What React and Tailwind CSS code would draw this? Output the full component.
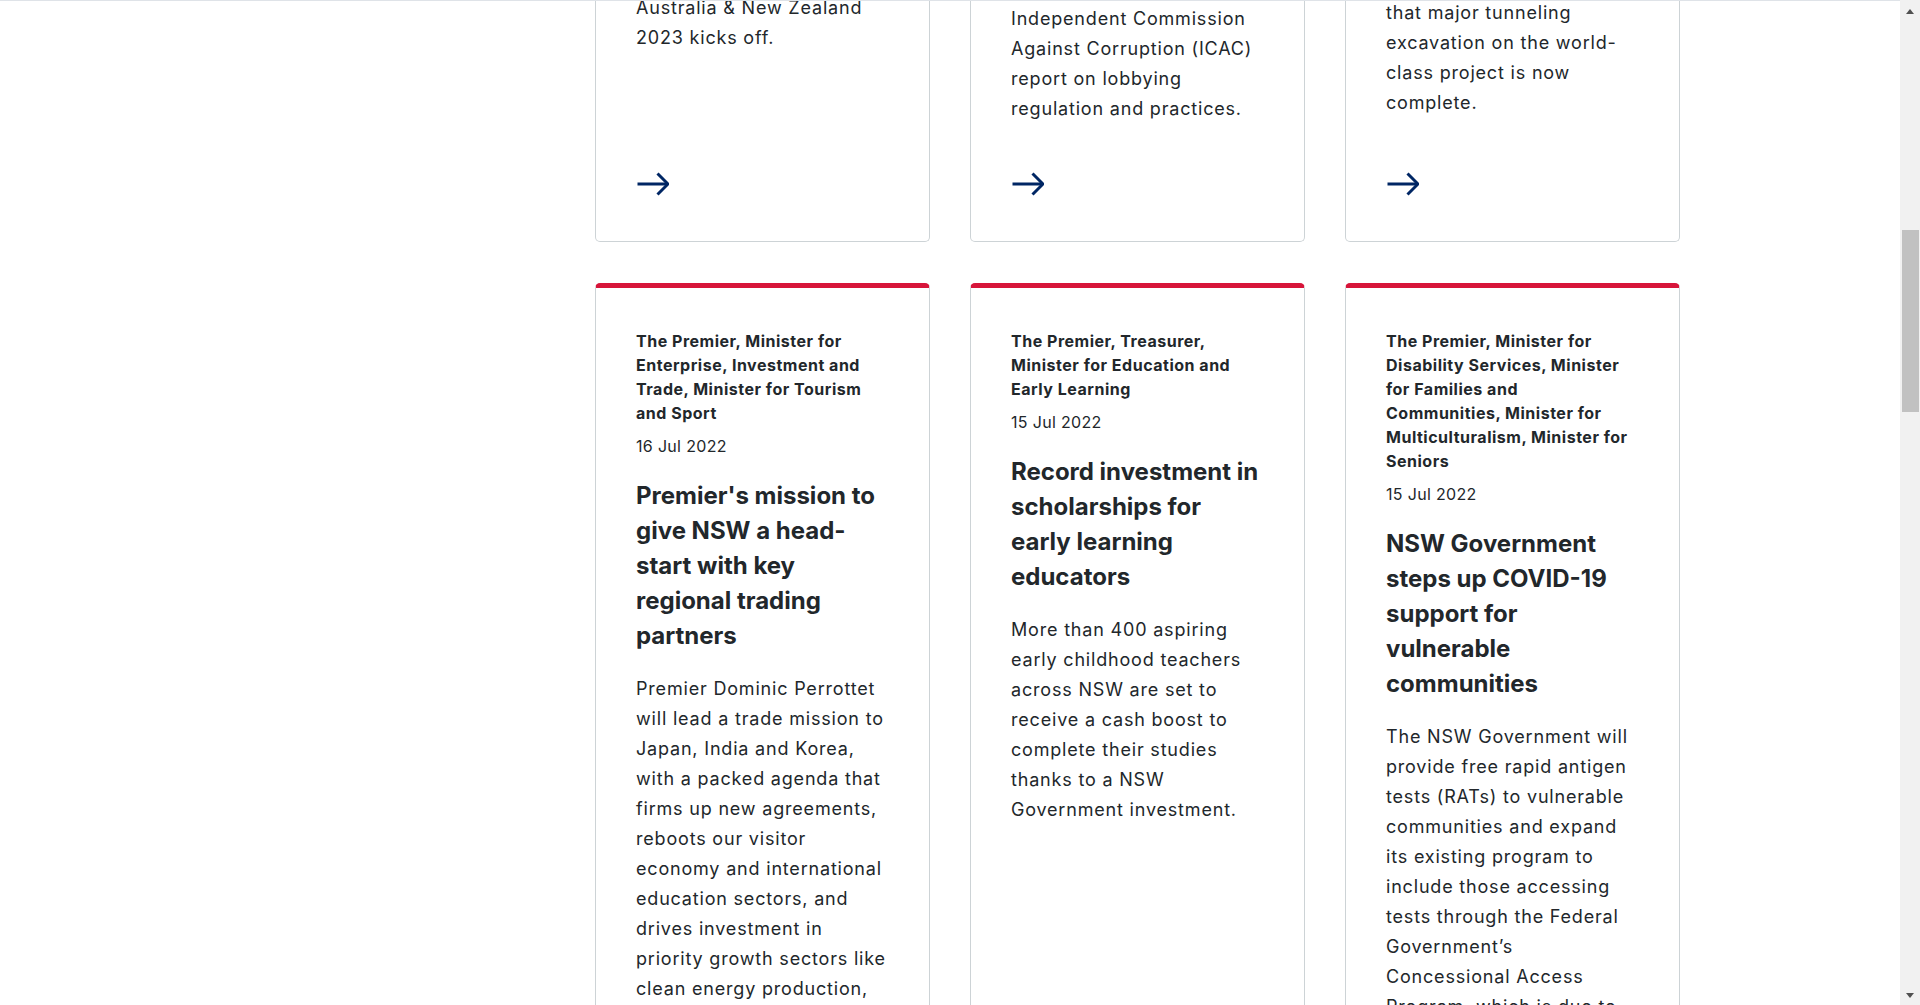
const topCards = [
  { offset: "mt-[-7px]", lines: ["Australia & New Zealand", "2023 kicks off."] },
  {
    offset: "mt-[4px]",
    lines: [
      "Independent Commission",
      "Against Corruption (ICAC)",
      "report on lobbying",
      "regulation and practices.",
    ],
  },
  {
    offset: "mt-[-2px]",
    lines: [
      "that major tunneling",
      "excavation on the world-",
      "class project is now",
      "complete.",
    ],
  },
];

const newsCards = [
  {
    author: [
      "The Premier, Minister for",
      "Enterprise, Investment and",
      "Trade, Minister for Tourism",
      "and Sport",
    ],
    date: "16 Jul 2022",
    title: [
      "Premier's mission to",
      "give NSW a head-",
      "start with key",
      "regional trading",
      "partners",
    ],
    body: [
      "Premier Dominic Perrottet",
      "will lead a trade mission to",
      "Japan, India and Korea,",
      "with a packed agenda that",
      "firms up new agreements,",
      "reboots our visitor",
      "economy and international",
      "education sectors, and",
      "drives investment in",
      "priority growth sectors like",
      "clean energy production,",
      "advanced manufacturing",
    ],
  },
  {
    author: [
      "The Premier, Treasurer,",
      "Minister for Education and",
      "Early Learning",
    ],
    date: "15 Jul 2022",
    title: [
      "Record investment in",
      "scholarships for",
      "early learning",
      "educators",
    ],
    body: [
      "More than 400 aspiring",
      "early childhood teachers",
      "across NSW are set to",
      "receive a cash boost to",
      "complete their studies",
      "thanks to a NSW",
      "Government investment.",
    ],
  },
  {
    author: [
      "The Premier, Minister for",
      "Disability Services, Minister",
      "for Families and",
      "Communities, Minister for",
      "Multiculturalism, Minister for",
      "Seniors",
    ],
    date: "15 Jul 2022",
    title: [
      "NSW Government",
      "steps up COVID-19",
      "support for",
      "vulnerable",
      "communities",
    ],
    body: [
      "The NSW Government will",
      "provide free rapid antigen",
      "tests (RATs) to vulnerable",
      "communities and expand",
      "its existing program to",
      "include those accessing",
      "tests through the Federal",
      "Government’s",
      "Concessional Access",
      "Program, which is due to",
    ],
  },
];

function Lines({ lines }) {
  return lines.map((l, i) => (
    <span key={i} className="block whitespace-nowrap">
      {l}
    </span>
  ));
}

function Arrow() {
  return (
    <svg width="32" height="32" viewBox="0 0 32 32" fill="none" className="ml-[1px]">
      <path d="M0.5 16H30" stroke="#002664" strokeWidth="3" />
      <path
        d="M20.5 5.5L31 16L20.5 26.5"
        stroke="#002664"
        strokeWidth="3"
        strokeLinejoin="miter"
      />
    </svg>
  );
}

function Scrollbar() {
  return (
    <div className="w-[20px] h-full bg-[#f1f1f1] flex flex-col items-center shrink-0">
      <div className="h-[23px] flex items-center justify-center">
        <div className="w-0 h-0 border-l-[4.5px] border-r-[4.5px] border-b-[5px] border-l-transparent border-r-transparent border-b-[#505050]" />
      </div>
      <div className="mt-[207px] w-[17px] h-[182px] bg-[#c1c1c1] ml-[1px]" />
      <div className="mt-auto h-[20px] flex items-center justify-center">
        <div className="w-0 h-0 border-l-[4.5px] border-r-[4.5px] border-t-[5px] border-l-transparent border-r-transparent border-t-[#505050]" />
      </div>
    </div>
  );
}

export default function App() {
  return (
    <div
      className="h-[1005px] w-full overflow-hidden bg-white flex text-[#22272b]"
      style={{ fontFamily: "Inter, 'Noto Sans', 'Liberation Sans', sans-serif" }}
    >
      <main className="flex-1 border-t border-[#dfe3e8] overflow-hidden">
        <div className="pl-[595px] mt-[-1px]">
          <div className="grid grid-cols-[335px_335px_335px] gap-x-10">
            {topCards.map((c, i) => (
              <div
                key={i}
                className="h-[242px] border border-t-0 border-[#cdd3d6] rounded-b-[5px] px-10 pb-[41px] flex flex-col overflow-hidden"
              >
                <p className={`${c.offset} text-[18px] leading-[30px] tracking-[0.045em]`}>
                  <Lines lines={c.lines} />
                </p>
                <div className="mt-auto">
                  <Arrow />
                </div>
              </div>
            ))}
          </div>

          <div className="mt-[41px] grid grid-cols-[335px_335px_335px] gap-x-10">
            {newsCards.map((c, i) => (
              <div
                key={i}
                className="border border-[#cdd3d6] border-t-[5px] border-t-[#d7153a] rounded-t-[5px] px-10 pt-[41px] pb-10"
              >
                <p className="text-[16px] leading-[24px] font-bold tracking-[0.032em]">
                  <Lines lines={c.author} />
                </p>
                <p className="mt-[9px] text-[16px] leading-[24px] tracking-[0.02em]">{c.date}</p>
                <h3 className="mt-[20px] text-[24px] leading-[35px] font-bold">
                  <Lines lines={c.title} />
                </h3>
                <p className="mt-[21px] text-[18px] leading-[30px] tracking-[0.045em]">
                  <Lines lines={c.body} />
                </p>
              </div>
            ))}
          </div>
        </div>
      </main>
      <Scrollbar />
    </div>
  );
}
